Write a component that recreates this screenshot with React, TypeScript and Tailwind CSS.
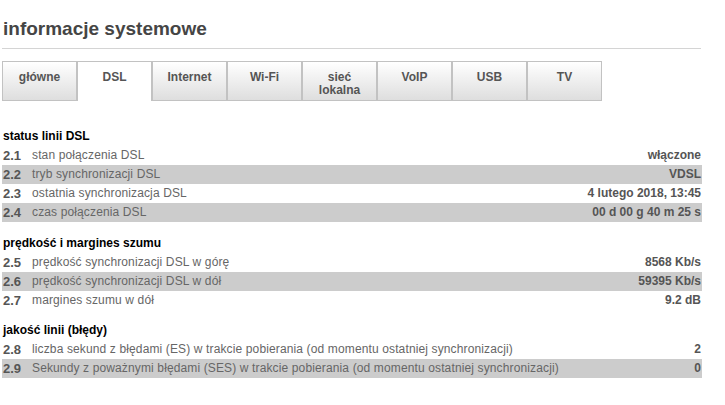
const tabs = ["główne", "DSL", "Internet", "Wi-Fi", "sieć lokalna", "VoIP", "USB", "TV"];

type Row = { no: string; label: string; value: string };

const sections: { title: string; gap: string; rows: Row[] }[] = [
  {
    title: "status linii DSL",
    gap: "mt-[26px]",
    rows: [
      { no: "2.1", label: "stan połączenia DSL", value: "włączone" },
      { no: "2.2", label: "tryb synchronizacji DSL", value: "VDSL" },
      { no: "2.3", label: "ostatnia synchronizacja DSL", value: "4 lutego 2018, 13:45" },
      { no: "2.4", label: "czas połączenia DSL", value: "00 d 00 g 40 m 25 s" },
    ],
  },
  {
    title: "prędkość i margines szumu",
    gap: "mt-[12px]",
    rows: [
      { no: "2.5", label: "prędkość synchronizacji DSL w górę", value: "8568 Kb/s" },
      { no: "2.6", label: "prędkość synchronizacji DSL w dół", value: "59395 Kb/s" },
      { no: "2.7", label: "margines szumu w dół", value: "9.2 dB" },
    ],
  },
  {
    title: "jakość linii (błędy)",
    gap: "mt-[11px]",
    rows: [
      {
        no: "2.8",
        label: "liczba sekund z błędami (ES) w trakcie pobierania (od momentu ostatniej synchronizacji)",
        value: "2",
      },
      {
        no: "2.9",
        label: "Sekundy z poważnymi błędami (SES) w trakcie pobierania (od momentu ostatniej synchronizacji)",
        value: "0",
      },
    ],
  },
];

export default function App() {
  return (
    <div className="h-[405px] w-[725px] overflow-hidden bg-white px-[2px] font-['Liberation_Sans',Arial,sans-serif]">
      <h1 className="pl-px pt-[18px] text-[19px] font-bold leading-[22px] text-[#454545]">
        informacje systemowe
      </h1>
      <div className="mt-[8px] h-px w-[699px] bg-[#d4d4d4]" />

      <div className="mt-[12px] flex">
        {tabs.map((t) => {
          const active = t === "DSL";
          return (
            <div
              key={t}
              className={`h-[40px] w-[75px] border-x border-t border-[#c2c2c2] pt-[9px] text-center text-[12px] font-bold leading-[13px] text-[#555] ${
                active ? "bg-white" : "border-b bg-gradient-to-b from-white to-[#dedede]"
              }`}
            >
              {t === "sieć lokalna" ? (
                <>
                  sieć
                  <br />
                  lokalna
                </>
              ) : (
                t
              )}
            </div>
          );
        })}
      </div>

      {sections.map((s) => (
        <div key={s.title} className={`${s.gap} w-[700px]`}>
          <div className="h-[19px] pl-px text-[12px] font-bold leading-[19px] text-black">{s.title}</div>
          {s.rows.map((r, i) => (
            <div
              key={r.no}
              className={`flex h-[19px] items-center pr-px text-[12px] leading-[19px] ${
                i % 2 === 1 ? "bg-[#cccccc]" : ""
              }`}
            >
              <span className="w-[30px] pl-px text-[13px] font-bold text-[#555]">{r.no}</span>
              <span className="flex-1 tracking-[0.13px] text-[#666]">{r.label}</span>
              <span className="font-bold text-[#555]">{r.value}</span>
            </div>
          ))}
        </div>
      ))}
    </div>
  );
}
